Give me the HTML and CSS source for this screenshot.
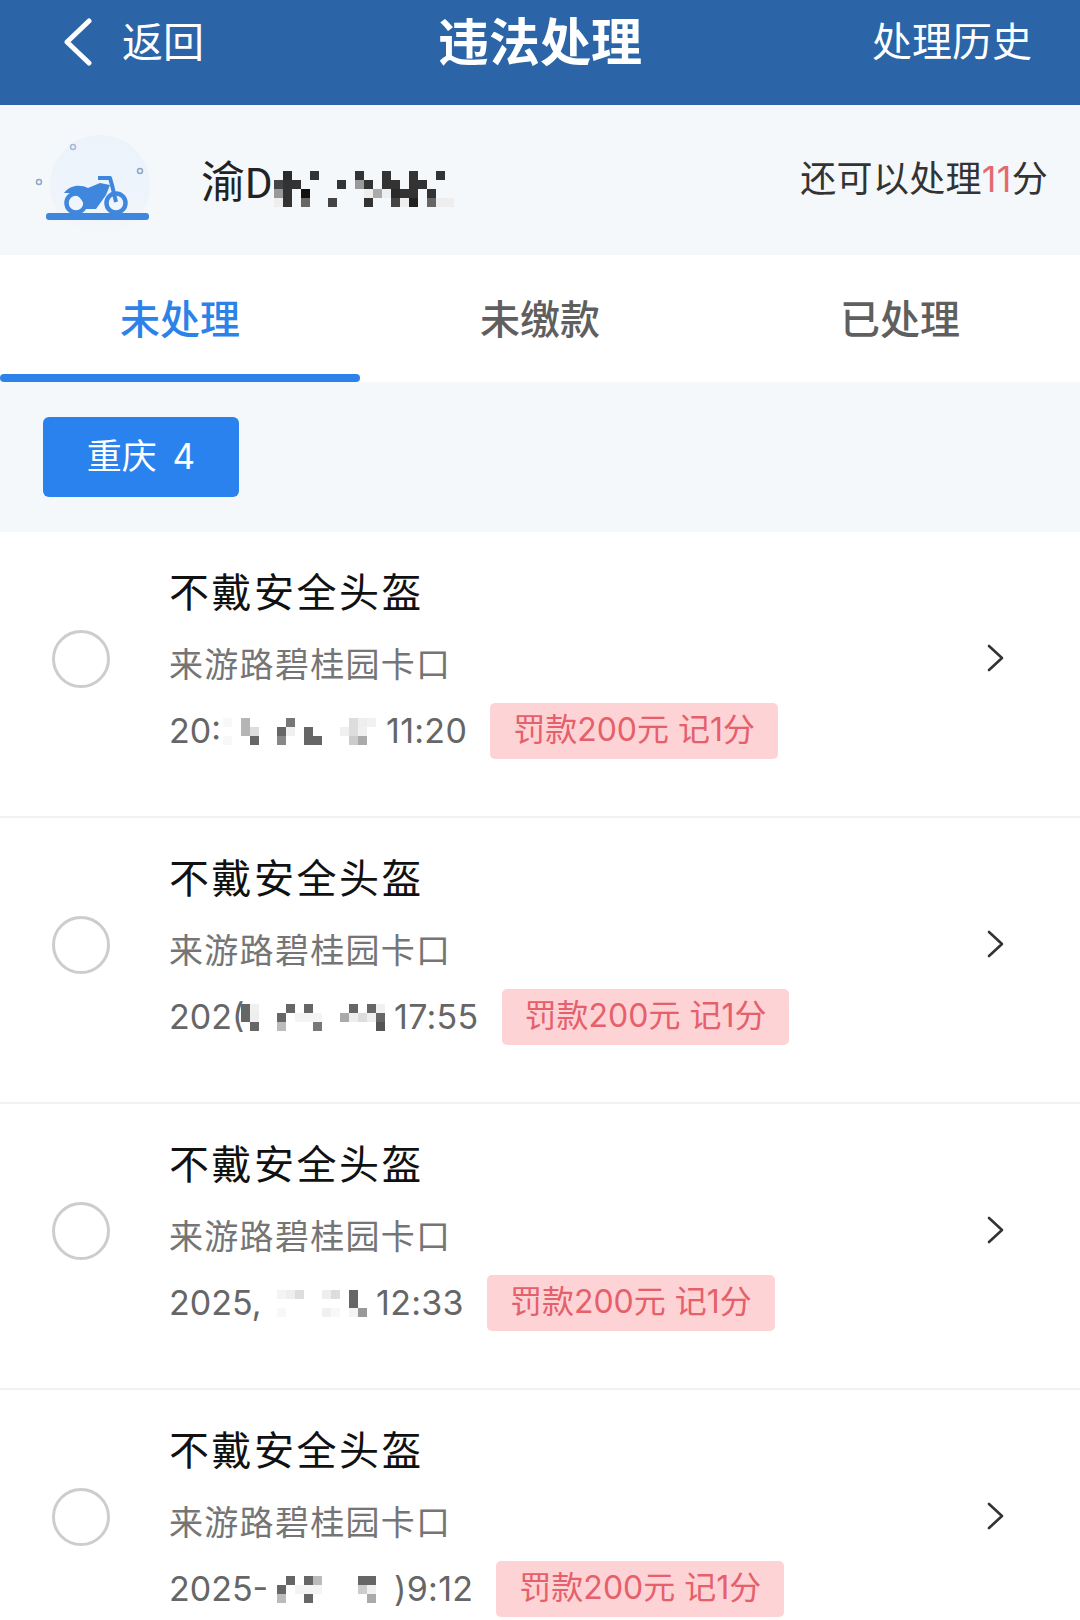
FILE: index.html
```html
<!DOCTYPE html>
<html lang="zh-CN">
<head>
  <meta charset="UTF-8">
  <title>违法处理</title>
  <link rel="stylesheet" href="styles.css">
</head>
<body>
  <div class="page">
    <header class="topbar">
      <div class="back">
        <svg class="back-icon" width="30" height="48" viewBox="0 0 30 48"><path d="M26 3 L4 24 L26 45" fill="none" stroke="#fff" stroke-width="5" stroke-linecap="round" stroke-linejoin="round"/></svg>
        <span class="back-text">返回</span>
      </div>
      <div class="topbar-title">违法处理</div>
      <div class="topbar-link">处理历史</div>
    </header>

    <section class="vehicle">
      <svg class="vehicle-icon" width="130" height="150" viewBox="0 0 130 150">
        <defs>
          <linearGradient id="glow" x1="0" y1="0" x2="0" y2="1">
            <stop offset="0" stop-color="#edf3fb"/>
            <stop offset="0.6" stop-color="#eef4fb"/>
            <stop offset="1" stop-color="#f5f8fa"/>
          </linearGradient>
        </defs>
        <circle cx="70" cy="80" r="50" fill="url(#glow)"/>
        <circle cx="43" cy="42" r="2.5" fill="none" stroke="#a9b8d8" stroke-width="1.5"/>
        <circle cx="110" cy="66" r="2.5" fill="none" stroke="#8fa6c8" stroke-width="1.5"/>
        <circle cx="9" cy="77" r="2.5" fill="none" stroke="#8fa6c8" stroke-width="1.5"/>
        <rect x="16" y="108" width="103" height="7" rx="3" fill="#3f87dd"/>
        <circle cx="46" cy="98" r="9.5" fill="none" stroke="#3f87dd" stroke-width="4.5"/>
        <circle cx="86" cy="98" r="9.5" fill="none" stroke="#3f87dd" stroke-width="4.5"/>
        <path d="M34 88 C40 80 50 79 58 83 L70 78 L80 80 L76 90 L66 104 L54 104 C55 94 46 87 34 88 Z" fill="#3f87dd"/>
        <path d="M68 73 L80 73 L82 80 L86 97" fill="none" stroke="#3f87dd" stroke-width="4" stroke-linejoin="round"/>
      </svg>
      <div class="plate-no">
        <span class="plate-text">渝<b class="plate-letter">D</b></span>
        <svg class="mosaic plate-mosaic" width="189" height="36" viewBox="0 0 21 4" shape-rendering="crispEdges">
          <rect x="2" y="0" width="1" height="1" fill="#2a2a2a"/><rect x="5" y="0" width="1" height="1" fill="#333"/><rect x="10" y="0" width="1" height="1" fill="#333"/><rect x="13" y="0" width="1" height="1" fill="#333"/><rect x="16" y="0" width="1" height="1" fill="#333"/><rect x="19" y="0" width="1" height="1" fill="#333"/>
          <rect x="1" y="1" width="1" height="1" fill="#444"/><rect x="2" y="1" width="1" height="1" fill="#333"/><rect x="3" y="1" width="1" height="1" fill="#333"/><rect x="8" y="1" width="1" height="1" fill="#333"/><rect x="10" y="1" width="1" height="1" fill="#999"/><rect x="11" y="1" width="1" height="1" fill="#333"/><rect x="13" y="1" width="1" height="1" fill="#333"/><rect x="14" y="1" width="1" height="1" fill="#333"/><rect x="16" y="1" width="1" height="1" fill="#333"/><rect x="17" y="1" width="1" height="1" fill="#333"/>
          <rect x="1" y="2" width="1" height="1" fill="#999"/><rect x="2" y="2" width="1" height="1" fill="#333"/><rect x="4" y="2" width="1" height="1" fill="#111"/><rect x="11" y="2" width="1" height="1" fill="#eee"/><rect x="12" y="2" width="1" height="1" fill="#aaa"/><rect x="13" y="2" width="1" height="1" fill="#eee"/><rect x="14" y="2" width="1" height="1" fill="#2a2a2a"/><rect x="15" y="2" width="1" height="1" fill="#333"/><rect x="16" y="2" width="1" height="1" fill="#333"/><rect x="18" y="2" width="1" height="1" fill="#333"/>
          <rect x="1" y="3" width="1" height="1" fill="#eee"/><rect x="2" y="3" width="1" height="1" fill="#333"/><rect x="4" y="3" width="1" height="1" fill="#666"/><rect x="7" y="3" width="1" height="1" fill="#444"/><rect x="11" y="3" width="1" height="1" fill="#333"/><rect x="14" y="3" width="1" height="1" fill="#444"/><rect x="15" y="3" width="1" height="1" fill="#eee"/><rect x="16" y="3" width="1" height="1" fill="#222"/><rect x="18" y="3" width="1" height="1" fill="#666"/><rect x="19" y="3" width="1" height="1" fill="#eee"/><rect x="20" y="3" width="1" height="1" fill="#eee"/>
        </svg>
      </div>
      <div class="points">还可以处理<em>11</em>分</div>
    </section>

    <nav class="tabs">
      <div class="tab active">未处理</div>
      <div class="tab">未缴款</div>
      <div class="tab">已处理</div>
    </nav>

    <section class="filter">
      <div class="city-btn"><span class="city-text">重庆 4</span></div>
    </section>

    <ul class="list">
      <li class="item">
        <span class="check"></span>
        <div class="info">
          <div class="title">不戴安全头盔</div>
          <div class="place">来游路碧桂园卡口</div>
          <div class="date-row">
            <span class="date-head head-a">20:</span>
            <svg class="mosaic" width="163" height="27" viewBox="0 0 18.1 3" shape-rendering="crispEdges">
              <rect x="0" y="0" width="1" height="1" fill="#f8f8f8"/><rect x="2" y="0" width="1" height="1" fill="#b5b5b5"/><rect x="7" y="0" width="1" height="1" fill="#777"/><rect x="14" y="0" width="1" height="1" fill="#ddd"/><rect x="15" y="0" width="1" height="1" fill="#eee"/><rect x="16" y="0" width="1" height="1" fill="#f2f2f2"/>
              <rect x="2" y="1" width="1" height="1" fill="#b5b5b5"/><rect x="3" y="1" width="1" height="1" fill="#ddd"/><rect x="6" y="1" width="1" height="1" fill="#666"/><rect x="7" y="1" width="1" height="1" fill="#f0f0f0"/><rect x="9" y="1" width="1" height="1" fill="#666"/><rect x="13" y="1" width="1" height="1" fill="#f0f0f0"/><rect x="14" y="1" width="1" height="1" fill="#ddd"/><rect x="15" y="1" width="1" height="1" fill="#f0f0f0"/>
              <rect x="0" y="2" width="1" height="1" fill="#f8f8f8"/><rect x="3" y="2" width="1" height="1" fill="#666"/><rect x="6" y="2" width="1" height="1" fill="#888"/><rect x="9" y="2" width="1" height="1" fill="#666"/><rect x="10" y="2" width="1" height="1" fill="#666"/><rect x="14" y="2" width="1" height="1" fill="#ccc"/><rect x="15" y="2" width="1" height="1" fill="#aaa"/>
            </svg>
            <span class="time">11:20</span>
            <span class="fine">罚款200元 记1分</span>
          </div>
        </div>
        <svg class="arrow" width="18" height="28" viewBox="0 0 18 28"><path d="M2 2 L15 14 L2 26" fill="none" stroke="#333" stroke-width="2.6" stroke-linecap="round" stroke-linejoin="round"/></svg>
      </li>

      <li class="item">
        <span class="check"></span>
        <div class="info">
          <div class="title">不戴安全头盔</div>
          <div class="place">来游路碧桂园卡口</div>
          <div class="date-row">
            <span class="date-head head-b">202(</span>
            <svg class="mosaic" width="153" height="27" viewBox="0 0 17 3" shape-rendering="crispEdges">
              <rect x="0" y="0" width="1" height="1" fill="#666"/><rect x="1" y="0" width="1" height="1" fill="#f0f0f0"/><rect x="5" y="0" width="1" height="1" fill="#666"/><rect x="7" y="0" width="1" height="1" fill="#666"/><rect x="12" y="0" width="1" height="1" fill="#666"/><rect x="14" y="0" width="1" height="1" fill="#666"/><rect x="15" y="0" width="1" height="1" fill="#f0f0f0"/>
              <rect x="0" y="1" width="1" height="1" fill="#666"/><rect x="1" y="1" width="1" height="1" fill="#eee"/><rect x="4" y="1" width="1" height="1" fill="#666"/><rect x="6" y="1" width="1" height="1" fill="#f4f4f4"/><rect x="7" y="1" width="1" height="1" fill="#f4f4f4"/><rect x="8" y="1" width="1" height="1" fill="#f4f4f4"/><rect x="11" y="1" width="1" height="1" fill="#aaa"/><rect x="12" y="1" width="1" height="1" fill="#eee"/><rect x="13" y="1" width="1" height="1" fill="#ddd"/><rect x="14" y="1" width="1" height="1" fill="#eee"/><rect x="15" y="1" width="1" height="1" fill="#666"/>
              <rect x="1" y="2" width="1" height="1" fill="#666"/><rect x="4" y="2" width="1" height="1" fill="#bbb"/><rect x="8" y="2" width="1" height="1" fill="#777"/><rect x="15" y="2" width="1" height="1" fill="#555"/>
            </svg>
            <span class="time">17:55</span>
            <span class="fine">罚款200元 记1分</span>
          </div>
        </div>
        <svg class="arrow" width="18" height="28" viewBox="0 0 18 28"><path d="M2 2 L15 14 L2 26" fill="none" stroke="#333" stroke-width="2.6" stroke-linecap="round" stroke-linejoin="round"/></svg>
      </li>

      <li class="item">
        <span class="check"></span>
        <div class="info">
          <div class="title">不戴安全头盔</div>
          <div class="place">来游路碧桂园卡口</div>
          <div class="date-row">
            <span class="date-head head-c">2025,</span>
            <svg class="mosaic" width="99" height="27" viewBox="0 0 11 3" shape-rendering="crispEdges">
              <rect x="0" y="0" width="1" height="1" fill="#f4f4f4"/><rect x="1" y="0" width="1" height="1" fill="#eee"/><rect x="2" y="0" width="1" height="1" fill="#ddd"/><rect x="5" y="0" width="1" height="1" fill="#eee"/><rect x="6" y="0" width="1" height="1" fill="#ddd"/><rect x="8" y="0" width="1" height="1" fill="#666"/>
              <rect x="8" y="1" width="1" height="1" fill="#666"/>
              <rect x="0" y="2" width="1" height="1" fill="#f8f8f8"/><rect x="5" y="2" width="1" height="1" fill="#f0f0f0"/><rect x="6" y="2" width="1" height="1" fill="#f8f8f8"/><rect x="8" y="2" width="1" height="1" fill="#f4f4f4"/><rect x="9" y="2" width="1" height="1" fill="#999"/>
            </svg>
            <span class="time">12:33</span>
            <span class="fine">罚款200元 记1分</span>
          </div>
        </div>
        <svg class="arrow" width="18" height="28" viewBox="0 0 18 28"><path d="M2 2 L15 14 L2 26" fill="none" stroke="#333" stroke-width="2.6" stroke-linecap="round" stroke-linejoin="round"/></svg>
      </li>

      <li class="item">
        <span class="check"></span>
        <div class="info">
          <div class="title">不戴安全头盔</div>
          <div class="place">来游路碧桂园卡口</div>
          <div class="date-row">
            <span class="date-head head-c">2025-</span>
            <svg class="mosaic" width="117" height="27" viewBox="0 0 13 3" shape-rendering="crispEdges">
              <rect x="1" y="0" width="1" height="1" fill="#666"/><rect x="3" y="0" width="1" height="1" fill="#666"/><rect x="4" y="0" width="1" height="1" fill="#bbb"/><rect x="9" y="0" width="1" height="1" fill="#666"/><rect x="10" y="0" width="1" height="1" fill="#666"/>
              <rect x="0" y="1" width="1" height="1" fill="#666"/><rect x="2" y="1" width="1" height="1" fill="#f4f4f4"/><rect x="3" y="1" width="1" height="1" fill="#f4f4f4"/><rect x="4" y="1" width="1" height="1" fill="#f4f4f4"/><rect x="9" y="1" width="1" height="1" fill="#ccc"/><rect x="10" y="1" width="1" height="1" fill="#f0f0f0"/>
              <rect x="0" y="2" width="1" height="1" fill="#bbb"/><rect x="3" y="2" width="1" height="1" fill="#666"/><rect x="10" y="2" width="1" height="1" fill="#aaa"/>
            </svg>
            <span class="time">)9:12</span>
            <span class="fine">罚款200元 记1分</span>
          </div>
        </div>
        <svg class="arrow" width="18" height="28" viewBox="0 0 18 28"><path d="M2 2 L15 14 L2 26" fill="none" stroke="#333" stroke-width="2.6" stroke-linecap="round" stroke-linejoin="round"/></svg>
      </li>
    </ul>
  </div>
</body>
</html>
```

FILE: styles.css
```css
html, body { margin: 0; padding: 0; background: #fff; }
body { font-family: Inter, "Noto Sans CJK SC", sans-serif; }
.page { width: 1080px; height: 1620px; overflow: hidden; }

.topbar { display: grid; grid-template-columns: 1fr auto 1fr; align-items: center; height: 105px; padding-bottom: 21px; box-sizing: border-box; background: #2b65a7; color: #fff; }
.back { display: flex; align-items: center; padding-left: 63px; font-size: 41px; }
.back-icon { margin-right: 29px; }
.back-text { margin-bottom: 6px; }
.topbar-title { margin-bottom: 6px; font-size: 51px; font-weight: 700; }
.topbar-link { justify-self: end; margin-bottom: 6px; padding-right: 48px; font-size: 40px; }

.vehicle { display: flex; align-items: center; height: 150px; padding: 0 32px 0 30px; background: #f5f8fa; }
.plate-no { display: flex; align-items: flex-start; margin: 4px 0 0 41px; height: 52px; }
.plate-text { display: block; white-space: nowrap; font-size: 44px; line-height: 52px; color: #222; }
.plate-letter { font-family: Roboto, sans-serif; font-size: 42px; font-weight: 400; }
.plate-mosaic { margin: 15px 0 0 -8px; }
.points { margin: 0 0 8px auto; font-size: 36px; letter-spacing: 0.3px; color: #333; }
.points em { font-style: normal; color: #e4696f; }

.tabs { display: flex; height: 127px; background: #fff; }
.tab { flex: 1; position: relative; display: flex; align-items: center; justify-content: center; height: 127px; padding-bottom: 3px; box-sizing: border-box; font-size: 40px; font-weight: 500; color: #5f5f5f; }
.tab.active { color: #2b82e8; }
.tab.active::after { content: ""; position: absolute; left: 0; right: 0; bottom: 0; height: 8px; border-radius: 4px; background: #2b82e8; }

.filter { height: 150px; padding: 35px 0 0 43px; box-sizing: border-box; background: #f5f8fa; }
.city-btn { display: flex; align-items: center; justify-content: center; width: 196px; height: 80px; border-radius: 6px; background: #2a82ee; color: #fff; font-size: 35px; word-spacing: 6px; }
.city-text { margin-bottom: 8px; }

.list { margin: 0; padding: 0; list-style: none; background: #fff; }
.item { display: flex; align-items: center; padding: 37px 0 57px; border-bottom: 2px solid #f2f2f2; }
.check { flex: none; width: 58px; height: 58px; margin: 0 59px 10px 52px; box-sizing: border-box; border: 3px solid #cdcdcd; border-radius: 50%; }
.info { flex: 1; min-width: 0; }
.title { height: 48px; line-height: 48px; font-size: 40px; letter-spacing: 2.5px; color: #111; }
.place { height: 44px; margin-top: 26px; line-height: 44px; font-size: 34px; letter-spacing: 1.3px; color: #757575; }
.date-row { display: flex; align-items: center; height: 56px; margin-top: 16px; font-size: 34px; color: #666; }
.date-head { display: block; flex: none; padding-bottom: 2px; white-space: nowrap; }
.head-a { width: 54px; }
.head-b { width: 72px; }
.head-c { width: 108px; }
.mosaic { display: block; flex: none; }
.time { display: block; flex: none; padding-bottom: 2px; letter-spacing: 0.3px; white-space: nowrap; }
.fine { flex: none; height: 56px; margin-left: 23px; padding: 0 23px; line-height: 54px; border-radius: 5px; background: #fdd3d6; color: #e5606a; font-size: 32px; }
.arrow { flex: none; margin: 0 75px 12px 0; }
```
